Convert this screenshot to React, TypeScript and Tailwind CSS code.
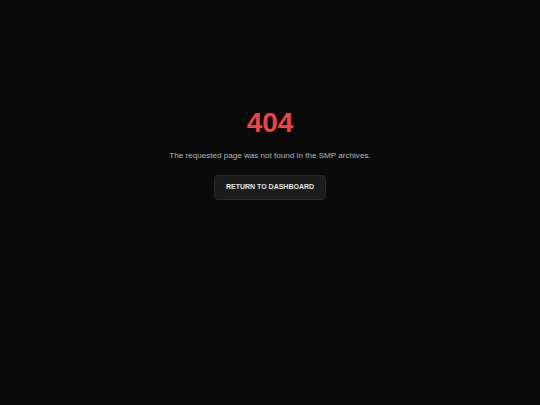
export default function App() {
  return (
    <div
      className="flex min-h-[405px] w-full flex-col items-center bg-[#0a0a0a] pt-[107px] text-center"
      style={{ fontFamily: '"Liberation Sans", Arial, sans-serif' }}
    >
      <h1 className="text-[28px] font-bold leading-[32px] text-[#ef4444]">404</h1>
      <p className="mt-[11px] text-[8.1px] leading-[12px] text-[#b5b5b5]">
        The requested page was not found in the SMP archives.
      </p>
      <button className="mt-[13px] h-[25px] w-[112px] rounded-[4px] border border-[#2a2a2a] bg-[#1c1c1c] text-[7px] font-bold text-[#e5e5e5]">
        RETURN TO DASHBOARD
      </button>
    </div>
  );
}
